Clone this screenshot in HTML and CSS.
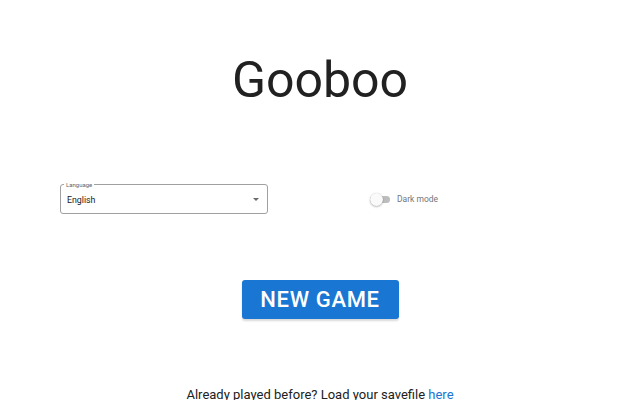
FILE: index.html
```html
<!DOCTYPE html>
<html lang="en">
<head>
<meta charset="utf-8">
<title>Gooboo</title>
<link rel="stylesheet" href="styles.css">
</head>
<body>
<main class="app">
  <h1 class="title">Gooboo</h1>

  <section class="settings">
    <div class="col">
      <div class="select">
        <span class="select-label">Language</span>
        <span class="select-value">English</span>
        <svg class="select-arrow" width="6" height="3" viewBox="0 0 6 3"><path d="M0 0h6L3 3z" fill="#6b6b6b"/></svg>
      </div>
    </div>
    <div class="col col-switch">
      <label class="switch">
        <span class="switch-track"><span class="switch-thumb"></span></span>
        <span class="switch-label">Dark mode</span>
      </label>
    </div>
  </section>

  <div class="actions">
    <button class="btn-primary">NEW GAME</button>
  </div>

  <p class="load">Already played before? Load your savefile <a href="#" class="link">here</a></p>
</main>
</body>
</html>
```
FILE: styles.css
```css
html, body {
  margin: 0;
  padding: 0;
  background: #ffffff;
  overflow: hidden;
}

body {
  font-family: Roboto, "Liberation Sans", sans-serif;
  color: rgba(0, 0, 0, 0.87);
  width: 640px;
  height: 400px;
}

.app {
  display: flex;
  flex-direction: column;
}

.title {
  margin: 50px 0 0;
  font-size: 50px;
  font-weight: 400;
  line-height: 60px;
  text-align: center;
  color: #212121;
}

.settings {
  display: grid;
  grid-template-columns: 320px 320px;
  margin-top: 74px;
  align-items: center;
}

.col {
  padding-left: 60px;
}

.col-switch {
  padding-left: 50px;
}

.select {
  position: relative;
  box-sizing: border-box;
  width: 208px;
  height: 30px;
  border: 1px solid #a0a0a0;
  border-radius: 3px;
  display: flex;
  align-items: center;
  padding: 0 6px;
}

.select-label {
  position: absolute;
  top: -4px;
  left: 3px;
  padding: 0 2px;
  background: #fff;
  font-size: 6px;
  line-height: 8px;
  color: #666;
}

.select-value {
  flex: 1;
  font-size: 8.8px;
  color: #212121;
  padding-top: 1px;
}

.select-arrow {
  margin-right: 2px;
}

.switch {
  display: flex;
  align-items: center;
  gap: 7px;
}

.switch-track {
  position: relative;
  width: 20px;
  height: 7px;
  border-radius: 4px;
  background: #bdbdbd;
}

.switch-thumb {
  position: absolute;
  left: 0;
  top: -3px;
  width: 13px;
  height: 13px;
  border-radius: 50%;
  background: #fafafa;
  box-shadow: 0 1px 2px rgba(0,0,0,0.25), 0 0 1px rgba(0,0,0,0.2);
}

.switch-label {
  font-size: 8.5px;
  color: #757575;
}

.actions {
  display: flex;
  justify-content: center;
  margin-top: 66px;
}

.btn-primary {
  width: 157px;
  height: 39px;
  border: none;
  border-radius: 3px;
  background: #1976d2;
  color: #fff;
  font-family: Roboto, "Liberation Sans", sans-serif;
  font-size: 22px;
  font-weight: 500;
  letter-spacing: 0.03em;
  box-shadow: 0 2px 2px rgba(0,0,0,0.15);
}

.load {
  margin: 66px 0 0;
  text-align: center;
  font-size: 13px;
  line-height: 20px;
  color: #212121;
}

.link {
  color: #1976d2;
  text-decoration: none;
}
```
